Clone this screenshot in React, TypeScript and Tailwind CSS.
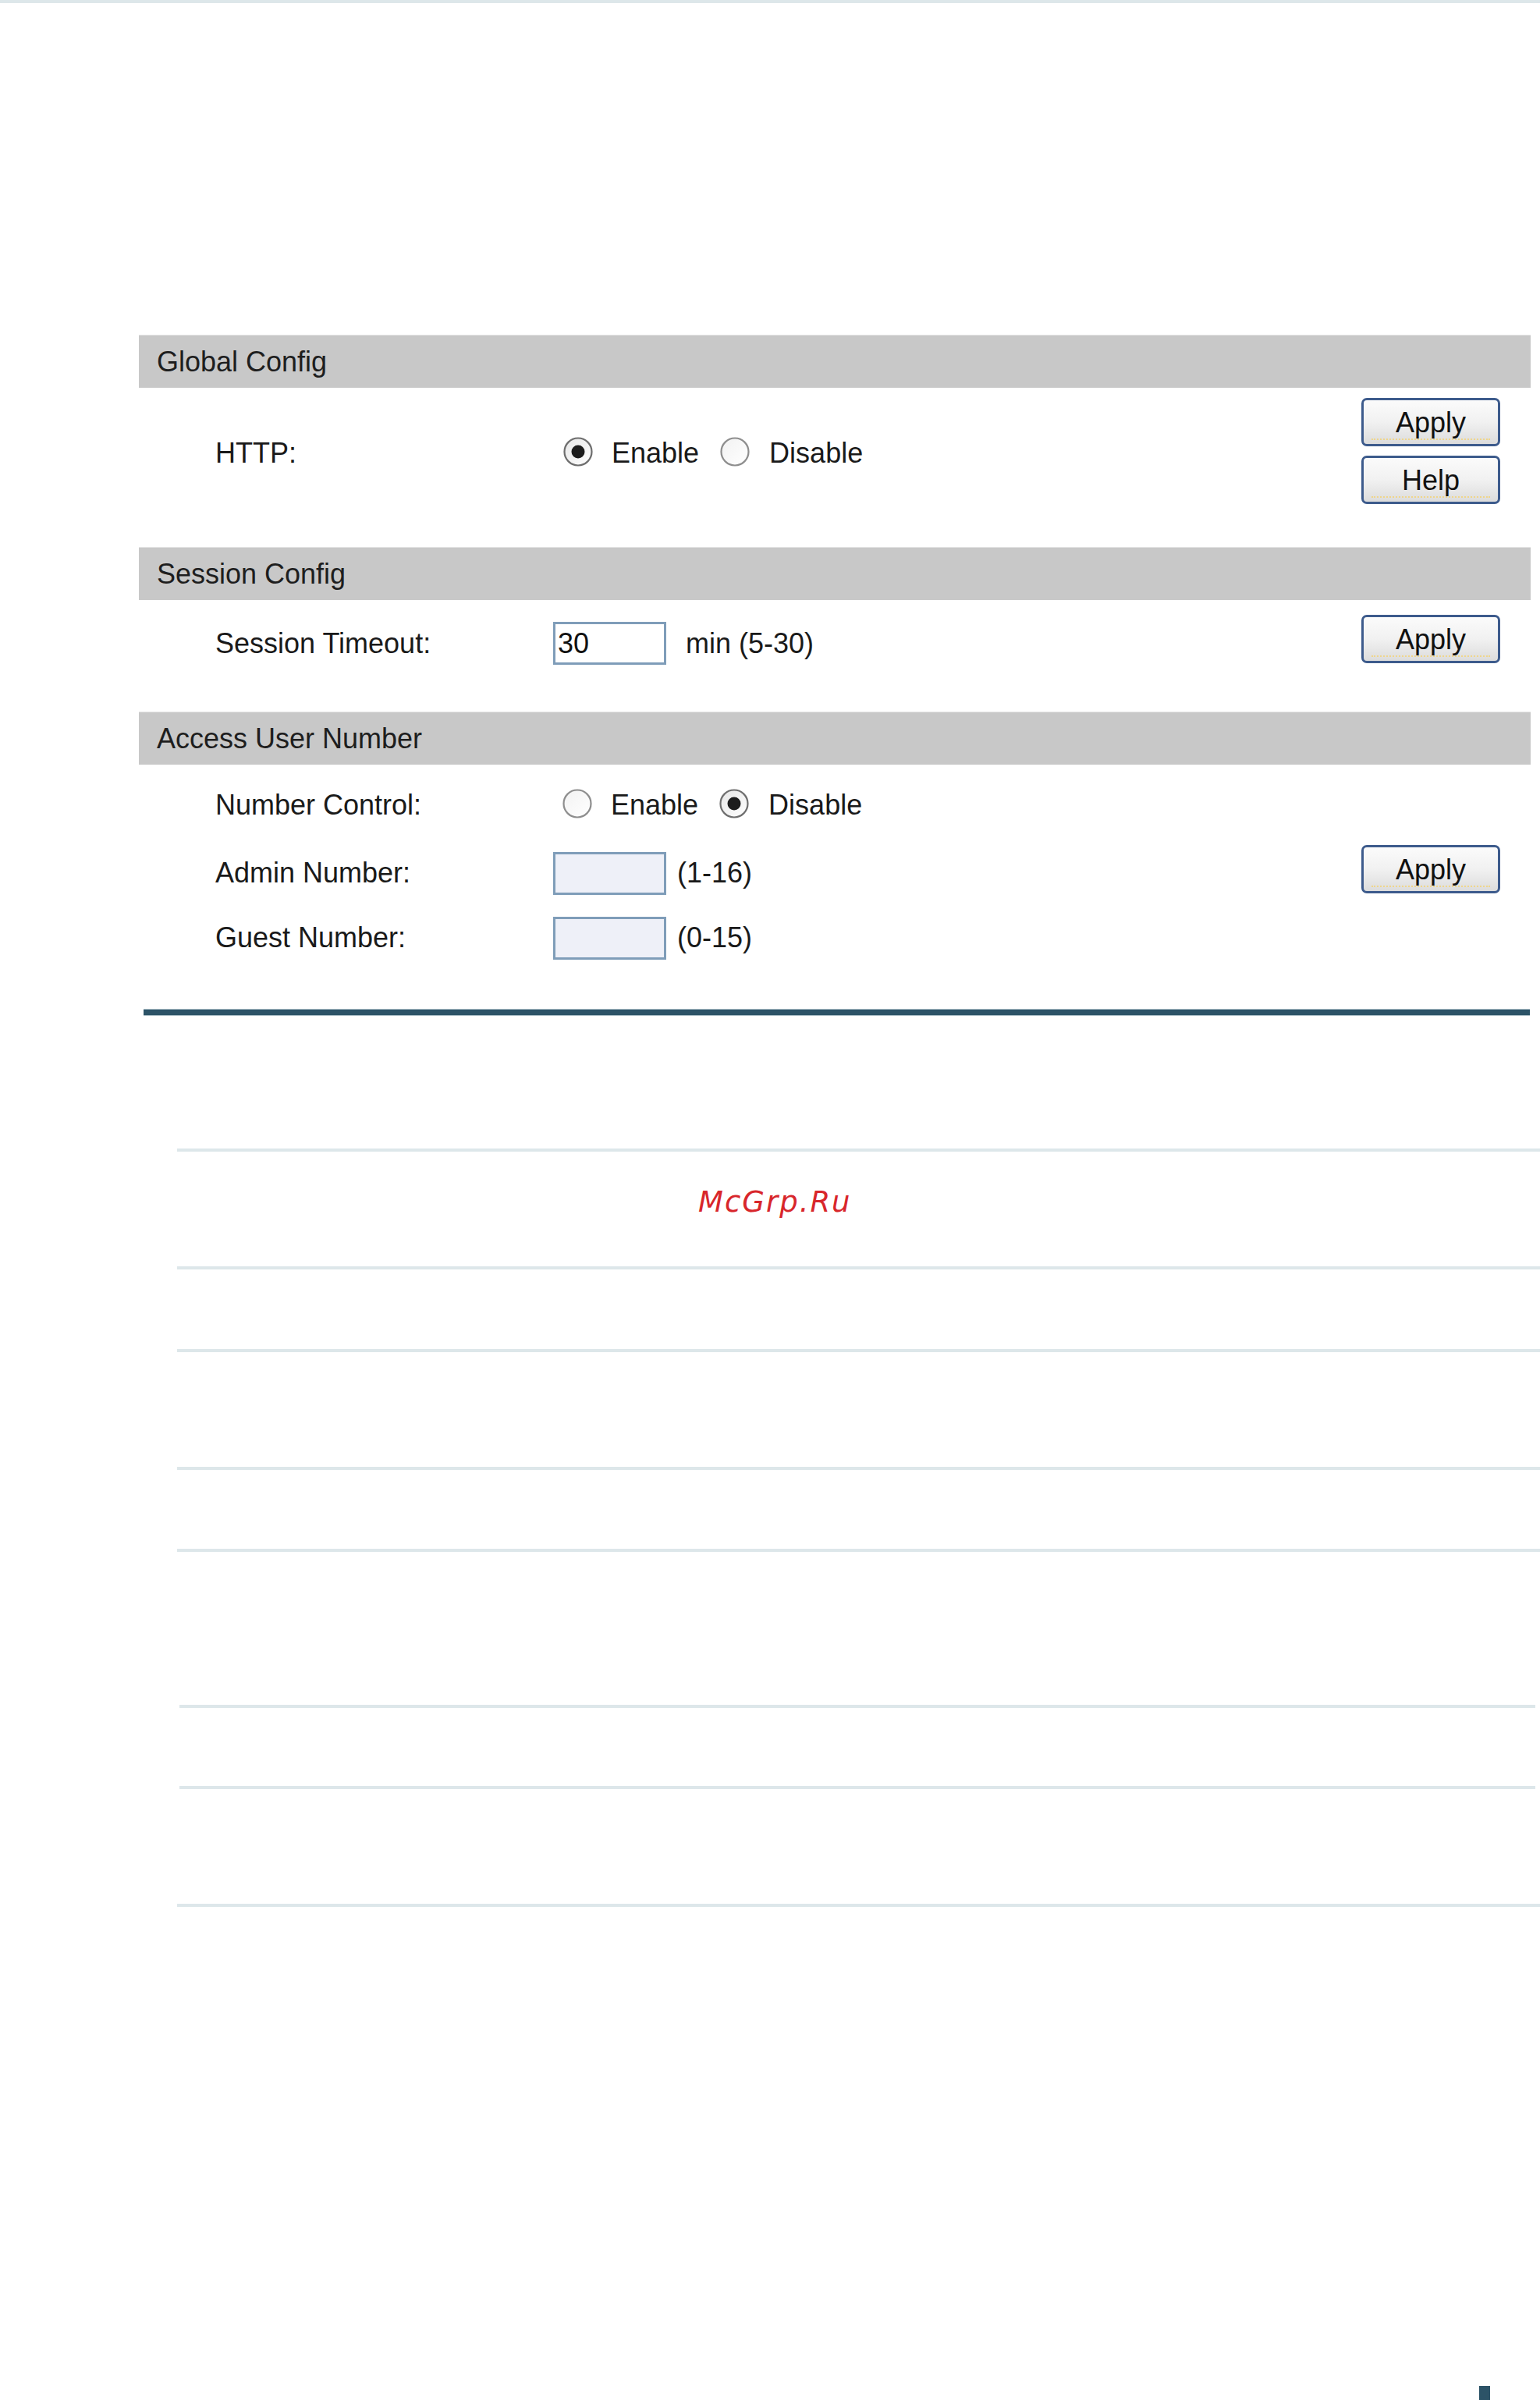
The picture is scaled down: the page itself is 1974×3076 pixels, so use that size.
import React from "react";

const font = "font-['Liberation_Sans',Arial,sans-serif]";

function Radio({ checked }: { checked: boolean }) {
  return (
    <svg width="40" height="40" viewBox="0 0 40 40" className="shrink-0">
      <defs>
        <linearGradient id={checked ? "rgc" : "rgu"} x1="0" y1="0" x2="1" y2="1">
          <stop offset="0" stopColor={checked ? "#e6e6e6" : "#f2f2f2"} />
          <stop offset="1" stopColor="#ffffff" />
        </linearGradient>
      </defs>
      <circle cx="20" cy="20" r="17.5" fill={`url(#${checked ? "rgc" : "rgu"})`} stroke={checked ? "#6e6e6e" : "#8e8e8e"} strokeWidth="2.2" />
      {checked && <circle cx="20" cy="20" r="8.5" fill="#1c1c1c" />}
    </svg>
  );
}

function Btn({ label }: { label: string }) {
  return (
    <div className="relative flex h-[62px] w-[178px] items-center justify-center rounded-[7px] border-[3px] border-[#3d5b8c] bg-linear-to-b from-[#fbfbfb] via-[#f1f1f1] to-[#dcdcdc] text-[36px] leading-none text-[#111]">
      <span className="relative top-[1px]">{label}</span>
      <span className="absolute inset-x-[10px] bottom-[5px] border-b-[2px] border-dotted border-[#efd68c]" />
    </div>
  );
}

function Header({ title }: { title: string }) {
  return (
    <div className="flex h-[68px] items-center border-t border-[#e4e4e4] bg-[#c8c8c8] pl-[23px] text-[36px] text-[#1e1e1e]">
      {title}
    </div>
  );
}

function Label({ children }: { children: React.ReactNode }) {
  return <div className="w-[433px] shrink-0 text-[36px] text-[#1a1a1a]">{children}</div>;
}

function TextBox({ value, tinted }: { value?: string; tinted?: boolean }) {
  return (
    <div
      className={`flex h-[55px] w-[145px] shrink-0 items-center border-[3px] border-[#7f9db9] pl-[3px] text-[36px] text-[#111] ${
        tinted ? "bg-[#eef0f8]" : "bg-white"
      }`}
    >
      {value}
    </div>
  );
}

function Line({ inset }: { inset?: boolean }) {
  return <div className={inset ? "ml-[230px] mr-[6px] h-[4px] bg-[#dde7ea]" : "ml-[227px] h-[4px] bg-[#dde7ea]"} />;
}

export default function App() {
  return (
    <div className={`${font} w-[1974px] bg-white`}>
      <div className="h-[4px] bg-[#dde7ea]" />
      <div className="h-[425px]" />

      <div className="ml-[178px] w-[1784px]">
        <Header title="Global Config" />
        <div className="flex h-[204px]">
          <div className="flex flex-1 items-start pt-[62px] pl-[98px]">
            <div className="flex h-[40px] items-center">
              <Label>
                <span className="relative top-[2px]">HTTP:</span>
              </Label>
              <div className="ml-[12px] flex items-center">
                <Radio checked />
                <span className="relative top-[2px] ml-[23px] text-[36px] text-[#1a1a1a]">Enable</span>
                <span className="ml-[26px]">
                  <Radio checked={false} />
                </span>
                <span className="relative top-[2px] ml-[24px] text-[36px] text-[#1a1a1a]">Disable</span>
              </div>
            </div>
          </div>
          <div className="mr-[39px] flex flex-col gap-[12px] pt-[13px]">
            <Btn label="Apply" />
            <Btn label="Help" />
          </div>
        </div>

        <Header title="Session Config" />
        <div className="flex h-[143px]">
          <div className="flex flex-1 items-start pt-[28px] pl-[98px]">
            <div className="flex h-[55px] items-center">
              <Label>Session Timeout:</Label>
              <TextBox value="30" />
              <span className="ml-[25px] text-[36px] text-[#1a1a1a]">min (5-30)</span>
            </div>
          </div>
          <div className="mr-[39px] pt-[19px]">
            <Btn label="Apply" />
          </div>
        </div>

        <Header title="Access User Number" />
        <div className="flex h-[313px]">
          <div className="flex flex-1 flex-col pt-[30px] pl-[98px]">
            <div className="flex h-[40px] items-center">
              <Label>
                <span className="relative top-[2px]">Number Control:</span>
              </Label>
              <div className="ml-[11px] flex items-center">
                <Radio checked={false} />
                <span className="relative top-[2px] ml-[23px] text-[36px] text-[#1a1a1a]">Enable</span>
                <span className="ml-[26px]">
                  <Radio checked />
                </span>
                <span className="relative top-[2px] ml-[24px] text-[36px] text-[#1a1a1a]">Disable</span>
              </div>
            </div>
            <div className="mt-[42px] flex h-[54px] items-center">
              <Label>Admin Number:</Label>
              <TextBox tinted />
              <span className="ml-[14px] text-[36px] text-[#1a1a1a]">(1-16)</span>
            </div>
            <div className="mt-[29px] flex h-[54px] items-center">
              <Label>Guest Number:</Label>
              <TextBox tinted />
              <span className="ml-[14px] text-[36px] text-[#1a1a1a]">(0-15)</span>
            </div>
          </div>
          <div className="mr-[39px] pt-[103px]">
            <Btn label="Apply" />
          </div>
        </div>
      </div>

      <div className="ml-[184px] h-[9px] w-[1777px] border-y border-[#a9bcc5] bg-[#2c5367]" />

      <div className="h-[170px]" />
      <Line />
      <div className="h-[147px] pt-[46px] pl-[895px]">
        <span className="font-['DejaVu_Sans',sans-serif] text-[37px] italic leading-[37px] tracking-[2px] text-[#d8262b]">
          McGrp.Ru
        </span>
      </div>
      <Line />
      <div className="h-[102px]" />
      <Line />
      <div className="h-[147px]" />
      <Line />
      <div className="h-[101px]" />
      <Line />
      <div className="h-[196px]" />
      <Line inset />
      <div className="h-[100px]" />
      <Line inset />
      <div className="h-[147px]" />
      <Line />
      <div className="h-[614px]" />
      <div className="ml-[1896px] h-[19px] w-[14px] bg-[#2c5367]" />
    </div>
  );
}
